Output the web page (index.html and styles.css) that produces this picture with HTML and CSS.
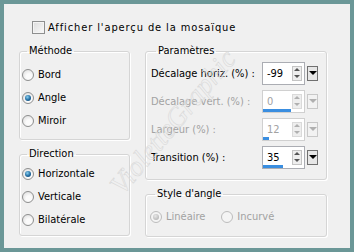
FILE: index.html
```html
<!DOCTYPE html>
<html lang="fr">
<head>
	<meta charset="UTF-8">
	<title>Mosaïque - angle</title>
	<link rel="stylesheet" href="styles.css">
</head>
<body>
	<div class="dialog">
		<label class="check-row"><span class="checkbox"></span><span class="check-text">Afficher l'aperçu de la mosaïque</span></label>

		<div class="groups">
			<div class="col">
				<fieldset class="group group--method">
					<legend>Méthode</legend>
					<label class="radio-row"><span class="radio"></span>Bord</label>
					<label class="radio-row"><span class="radio is-checked"></span>Angle</label>
					<label class="radio-row"><span class="radio"></span>Miroir</label>
				</fieldset>
				<fieldset class="group group--direction">
					<legend>Direction</legend>
					<label class="radio-row"><span class="radio is-checked"></span>Horizontale</label>
					<label class="radio-row"><span class="radio"></span>Verticale</label>
					<label class="radio-row"><span class="radio"></span>Bilatérale</label>
				</fieldset>
			</div>

			<div class="col">
				<fieldset class="group group--params">
					<legend>Paramètres</legend>
					<div class="param-row">
						<span class="param-label">Décalage horiz. (%) :</span>
						<div class="spin"><span class="spin-value">-99</span><span class="spin-arrows"><i class="up"></i><i class="down"></i></span></div>
						<span class="drop"></span>
					</div>
					<div class="param-row is-disabled">
						<span class="param-label">Décalage vert. (%) :</span>
						<div class="spin"><span class="spin-value">0</span><span class="spin-arrows"><i class="up"></i><i class="down"></i></span><span class="spin-bar" style="width: 28px"></span></div>
						<span class="drop"></span>
					</div>
					<div class="param-row is-disabled">
						<span class="param-label">Largeur (%) :</span>
						<div class="spin"><span class="spin-value">12</span><span class="spin-arrows"><i class="up"></i><i class="down"></i></span><span class="spin-bar" style="width: 6px"></span></div>
						<span class="drop"></span>
					</div>
					<div class="param-row">
						<span class="param-label">Transition (%) :</span>
						<div class="spin"><span class="spin-value">35</span><span class="spin-arrows"><i class="up"></i><i class="down"></i></span><span class="spin-bar" style="width: 20px"></span></div>
						<span class="drop"></span>
					</div>
				</fieldset>
				<fieldset class="group group--style">
					<legend>Style d'angle</legend>
					<div class="inline-radios">
						<label class="radio-row is-disabled"><span class="radio is-checked"></span>Linéaire</label>
						<label class="radio-row is-disabled"><span class="radio"></span>Incurvé</label>
					</div>
				</fieldset>
			</div>
		</div>

		<span class="watermark">VioletteGraphic</span>
	</div>
</body>
</html>
```

FILE: styles.css
```css
body {
	margin: 0;
	padding: 0;
	background: #6b9797;
	font-family: 'DejaVu Sans Condensed', 'DejaVu Sans', sans-serif;
	font-stretch: condensed;
	font-size: 11px;
	color: #000;
}

.dialog {
	position: relative;
	overflow: hidden;
	box-sizing: border-box;
	width: 354px;
	height: 252px;
	border: 4px solid #6b9797;
	background: #f0f0f0;
	padding: 16px 0 0 15px;
}

/* checkbox */
.check-row {
	display: flex;
	align-items: center;
	gap: 3px;
	height: 14px;
	margin-left: 13px;
}

.check-text {
	letter-spacing: 0.9px;
}

.checkbox {
	width: 11px;
	height: 11px;
	border: 1px solid #8e8f8f;
	background: linear-gradient(135deg, #dcdcdc, #fafafa);
	box-shadow: inset 0 0 0 1px #f4f4f4;
}

/* groups */
.groups {
	display: grid;
	grid-template-columns: 111px 182px;
	column-gap: 15px;
	margin-top: 10px;
}

.col {
	display: flex;
	flex-direction: column;
	gap: 7px;
}

.group {
	margin: 0;
	padding: 0 0 0 2px;
	border: 1px solid #d5d5d5;
	border-radius: 3px;
	box-shadow: 1px 1px 0 #fff, inset 1px 1px 0 #fff;
	min-width: 0;
}

.group legend {
	margin-left: 5px;
	padding: 0 2px;
	line-height: 14px;
}

.group--method {
	padding-top: 5px;
	padding-bottom: 7px;
}

.group--direction {
	padding-top: 1px;
	padding-bottom: 4px;
}

.group--params {
	padding: 1px 0 8px 5px;
}

.group--style {
	padding: 4px 0 8px 4px;
}

/* radios */
.radio-row {
	display: flex;
	align-items: center;
	gap: 4px;
	height: 23px;
}

.radio {
	box-sizing: border-box;
	width: 12px;
	height: 12px;
	border-radius: 50%;
	border: 1px solid #8e8f8f;
	background: radial-gradient(circle at 60% 65%, #fbfbfb 30%, #d8d8d8 100%);
	position: relative;
}

.radio.is-checked::after {
	content: "";
	position: absolute;
	left: 2px;
	top: 2px;
	width: 6px;
	height: 6px;
	border-radius: 50%;
	background: radial-gradient(circle at 40% 35%, #8ad0f0 0, #1f6aa0 55%, #0f3e66 100%);
}

.is-disabled {
	color: #a2a2a2;
}

.is-disabled .radio {
	border-color: #bcbcbc;
	background: #f4f4f4;
}

.is-disabled .radio.is-checked::after {
	background: radial-gradient(circle at 40% 35%, #e8e8e8 0, #a8a8a8 100%);
}

.inline-radios {
	display: flex;
	gap: 16px;
}

/* parameter rows */
.param-row {
	display: flex;
	align-items: center;
	height: 28px;
}

.param-label {
	width: 111px;
	flex: none;
}

.spin {
	position: relative;
	box-sizing: border-box;
	width: 43px;
	height: 23px;
	border: 1px solid #abadb3;
	background: #fff;
	display: flex;
	align-items: center;
	padding-left: 4px;
}

.spin-value {
	flex: 1;
}

.spin-arrows {
	display: flex;
	flex-direction: column;
	width: 8px;
	height: 13px;
	margin-right: 2px;
	border: 1px solid #c4c4c4;
	background: #eeeeee;
}

.spin-arrows i {
	flex: 1;
	display: flex;
	align-items: center;
	justify-content: center;
}

.spin-arrows i::before {
	content: "";
	border-left: 3px solid transparent;
	border-right: 3px solid transparent;
}

.spin-arrows .up::before {
	border-bottom: 3px solid #555;
}

.spin-arrows .down::before {
	border-top: 3px solid #555;
}

.spin-bar {
	position: absolute;
	left: 0;
	bottom: 0;
	height: 3px;
	background: #3a8ee0;
}

.drop {
	box-sizing: border-box;
	width: 11px;
	height: 15px;
	margin-left: 2px;
	border: 1px solid #707070;
	background: #e6e6e6;
	display: flex;
	align-items: center;
	justify-content: center;
}

.drop::before {
	content: "";
	border-left: 4px solid transparent;
	border-right: 4px solid transparent;
	border-top: 4px solid #000;
}

.is-disabled .spin {
	border-color: #d0d0d0;
}

.is-disabled .spin-arrows {
	border-color: #dadada;
}

.is-disabled .spin-arrows i::before {
	border-bottom-color: #b0b0b0;
	border-top-color: #b0b0b0;
}

.is-disabled .drop {
	border-color: #c8c8c8;
	background: #f2f2f2;
}

.is-disabled .drop::before {
	border-top-color: #b0b0b0;
}

/* faint watermark over the dialog */
.watermark {
	position: absolute;
	left: 169px;
	top: 118px;
	transform: translate(-50%, -50%) rotate(-50deg);
	font-family: 'Liberation Serif', serif;
	font-style: italic;
	font-size: 28px;
	white-space: nowrap;
	color: transparent;
	-webkit-text-stroke: 0.6px #d9d9d9;
	pointer-events: none;
}
```
